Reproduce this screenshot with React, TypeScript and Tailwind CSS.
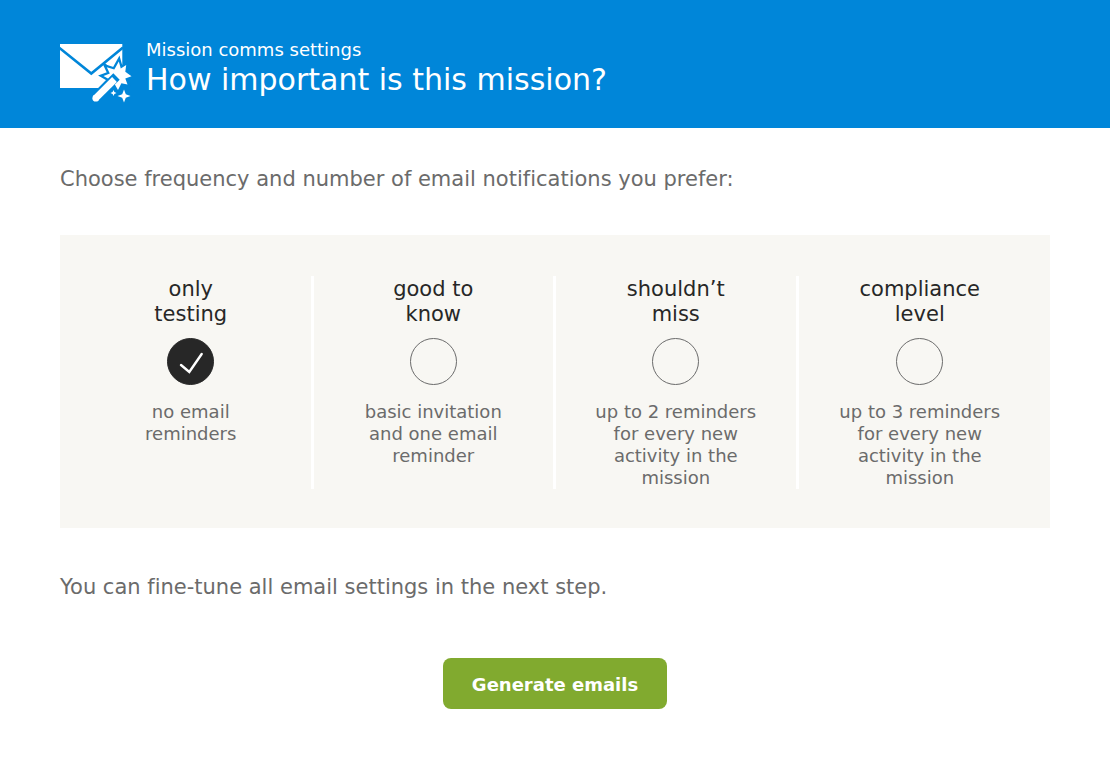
import { useState } from "react";

const options = [
  { id: "testing", title: ["only", "testing"], note: "no email reminders" },
  { id: "good", title: ["good to", "know"], note: "basic invitation and one email reminder" },
  { id: "miss", title: ["shouldn’t", "miss"], note: "up to 2 reminders for every new activity in the mission" },
  { id: "compliance", title: ["compliance", "level"], note: "up to 3 reminders for every new activity in the mission" },
];

function MailWandIcon() {
  return (
    <svg viewBox="0 0 72 60" className="h-[60px] w-[72px] shrink-0" aria-hidden="true">
      <path d="M0 1H62.3V24L52 38L41 45H0Z" fill="#fff" />
      <path d="M-1 4.5L31.3 30.5L63 4.5" fill="none" stroke="#0086d9" strokeWidth="2.6" />
      <path d="M43 20L48 24" stroke="#0086d9" strokeWidth="2.2" />
      <path d="M36 55L53 38" stroke="#0086d9" strokeWidth="11" strokeLinecap="round" />
      <path
        d="M58.8 18.5L60.8 25.6L66.2 22L65.3 28.8L71.5 33.2L65.3 35.4L67.5 41.5L61.4 40.3L58 47L54.4 40.8L48.5 42.5L49.6 36.4L43.5 32.9L49.8 30.6L46.8 24.2L54.3 26.6Z"
        fill="#fff"
        stroke="#0086d9"
        strokeWidth="4.6"
        strokeMiterlimit="5"
        paintOrder="stroke"
      />
      <path d="M47 43L56.5 33.5" stroke="#0086d9" strokeWidth="9" />
      <path d="M35.8 55.2L54.5 36.5" stroke="#fff" strokeWidth="6.8" />
      <circle cx="35.8" cy="55.2" r="3.4" fill="#fff" />
      <path d="M64 46.5L65.8 51.2L70.5 53L65.8 54.8L64 59.5L62.2 54.8L57.5 53L62.2 51.2Z" fill="#fff" />
      <path d="M53.5 47L54.4 49.1L56.5 50L54.4 50.9L53.5 53L52.6 50.9L50.5 50L52.6 49.1Z" fill="#fff" />
    </svg>
  );
}

export default function App() {
  const [selected, setSelected] = useState("testing");
  return (
    <div className="min-h-screen bg-white font-['DejaVu_Sans',sans-serif] text-[#6b6b6b] [font-variant-ligatures:none]">
      <header className="flex items-start gap-[14px] bg-[#0086d9] px-[60px] pt-[39px] pb-[25px] text-white">
        <div className="pt-1">
          <MailWandIcon />
        </div>
        <div className="h-16">
          <p className="text-[18px] leading-[22px]">Mission comms settings</p>
          <h1 className="text-[30px] leading-[38px]">How important is this mission?</h1>
        </div>
      </header>
      <main className="px-[60px]">
        <form onSubmit={(e) => e.preventDefault()}>
          <p id="frequency-label" className="pt-[37px] text-[21px] leading-7">
            Choose frequency and number of email notifications you prefer:
          </p>
          <div
            role="radiogroup"
            aria-labelledby="frequency-label"
            className="mt-[42px] grid grid-cols-4 bg-[#f8f7f3] pt-[41px] pr-[9px] pb-[39px] pl-[11px]"
          >
            {options.map((o) => (
              <label
                key={o.id}
                className="flex flex-col items-center border-r-[3px] border-white px-8 text-center last:border-r-0"
              >
                <span className="pt-px text-[21px] leading-[25px] text-[#272727]">
                  {o.title[0]}
                  <br />
                  {o.title[1]}
                </span>
                <span className="mt-[11px] grid">
                  <input
                    type="radio"
                    name="frequency"
                    value={o.id}
                    checked={selected === o.id}
                    onChange={() => setSelected(o.id)}
                    className="peer col-start-1 row-start-1 size-[47px] appearance-none rounded-full border border-[#6b6b6b] checked:border-[#272727] checked:bg-[#272727]"
                  />
                  <svg
                    viewBox="0 0 47 47"
                    className="pointer-events-none invisible col-start-1 row-start-1 size-[47px] peer-checked:visible"
                    aria-hidden="true"
                  >
                    <path d="M14 27L22.3 34L34.7 16" fill="none" stroke="#fff" strokeWidth="2.4" strokeLinecap="round" />
                  </svg>
                </span>
                <span className="mt-4 max-w-[168px] text-[18px] leading-[22px]">{o.note}</span>
              </label>
            ))}
          </div>
          <p className="pt-[45px] text-[21px] leading-7">You can fine-tune all email settings in the next step.</p>
          <div className="flex justify-center pt-[57px] pb-16">
            <button type="submit" className="h-[51px] rounded-lg bg-[#81aa2f] px-[29px] pt-0.5 text-[18px] font-bold text-white">
              Generate emails
            </button>
          </div>
        </form>
      </main>
    </div>
  );
}
